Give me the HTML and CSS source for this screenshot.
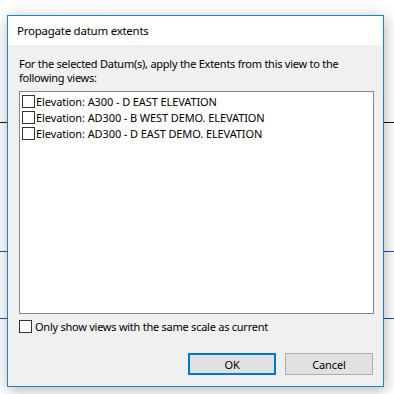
FILE: index.html
```html
<!DOCTYPE html>
<html lang="en">
<head>
  <meta charset="UTF-8" />
  <title>Propagate datum extents</title>
  <link rel="stylesheet" href="styles.css">
</head>
<body>
  <div class="canvas">
    <div class="grid-line line-black" style="top: 122px"></div>
    <div class="grid-line line-blue" style="top: 251px"></div>
    <div class="grid-line line-blue" style="top: 318px"></div>
  </div>

  <div class="dialog">
    <div class="title">Propagate datum extents</div>
    <div class="content">
      <p class="intro">For the selected Datum(s), apply the Extents from this view to the following views:</p>

      <div class="view-list">
        <label class="view-item"><input type="checkbox"> Elevation: A300 - D EAST ELEVATION</label>
        <label class="view-item"><input type="checkbox"> Elevation: AD300 - B WEST DEMO. ELEVATION</label>
        <label class="view-item"><input type="checkbox"> Elevation: AD300 - D EAST DEMO. ELEVATION</label>
      </div>

      <label class="scale-option"><input type="checkbox"> Only show views with the same scale as current</label>

      <div class="buttons">
        <button class="btn btn-default">OK</button>
        <button class="btn">Cancel</button>
      </div>
    </div>
  </div>
</body>
</html>
```

FILE: styles.css
```css
* {
  box-sizing: border-box;
  margin: 0;
  padding: 0;
}

body {
  background-color: white;
  font-family: 'Noto Sans', 'Liberation Sans', sans-serif;
  font-size: 11px;
  letter-spacing: -0.25px;
  color: black;
  padding: 15px 0 0 7px;
  width: 394px;
  height: 394px;
  overflow: hidden;
}

/* drawing behind the dialog */
.canvas {
  position: absolute;
  inset: 0;
}

.grid-line {
  position: absolute;
  left: 0;
  right: 0;
  height: 1px;
}

.line-black {
  background-color: #111;
}

.line-blue {
  background-color: #1a4fb8;
}

.dialog {
  position: relative;
  width: 377px;
  height: 372px;
  border: 1px solid #1883d7;
  background-color: #f0f0f0;
  box-shadow: 1px 3px 14px rgba(0, 0, 0, 0.3);
  display: flex;
  flex-direction: column;
}

.title {
  background-color: white;
  height: 29px;
  line-height: 29px;
  padding-left: 9px;
  font-size: 11.5px;
}

.content {
  flex: 1;
  padding: 12px 9px 11px 11px;
  display: flex;
  flex-direction: column;
}

.intro {
  line-height: 14px;
  margin-bottom: 6px;
}

.view-list {
  height: 223px;
  width: 355px;
  background-color: white;
  border: 1px solid #828790;
  padding: 1px 2px;
}

.view-item {
  display: flex;
  align-items: center;
  height: 16px;
  white-space: nowrap;
  letter-spacing: -0.1px;
}

input[type="checkbox"] {
  appearance: none;
  width: 13px;
  height: 13px;
  border: 1px solid #333;
  background-color: white;
  margin-right: 1px;
  flex-shrink: 0;
}

.scale-option {
  display: flex;
  align-items: center;
  margin-top: 5px;
  height: 14px;
}

.scale-option input[type="checkbox"] {
  margin-right: 3px;
}

.buttons {
  margin-top: auto;
  display: flex;
  justify-content: flex-end;
  gap: 9px;
  padding-right: 1px;
}

.btn {
  width: 88px;
  height: 22px;
  font-family: inherit;
  font-size: 11px;
  letter-spacing: -0.1px;
  color: black;
  background-color: #e1e1e1;
  border: 1px solid #adadad;
}

.btn-default {
  border: 2px solid #0078d7;
}
```
